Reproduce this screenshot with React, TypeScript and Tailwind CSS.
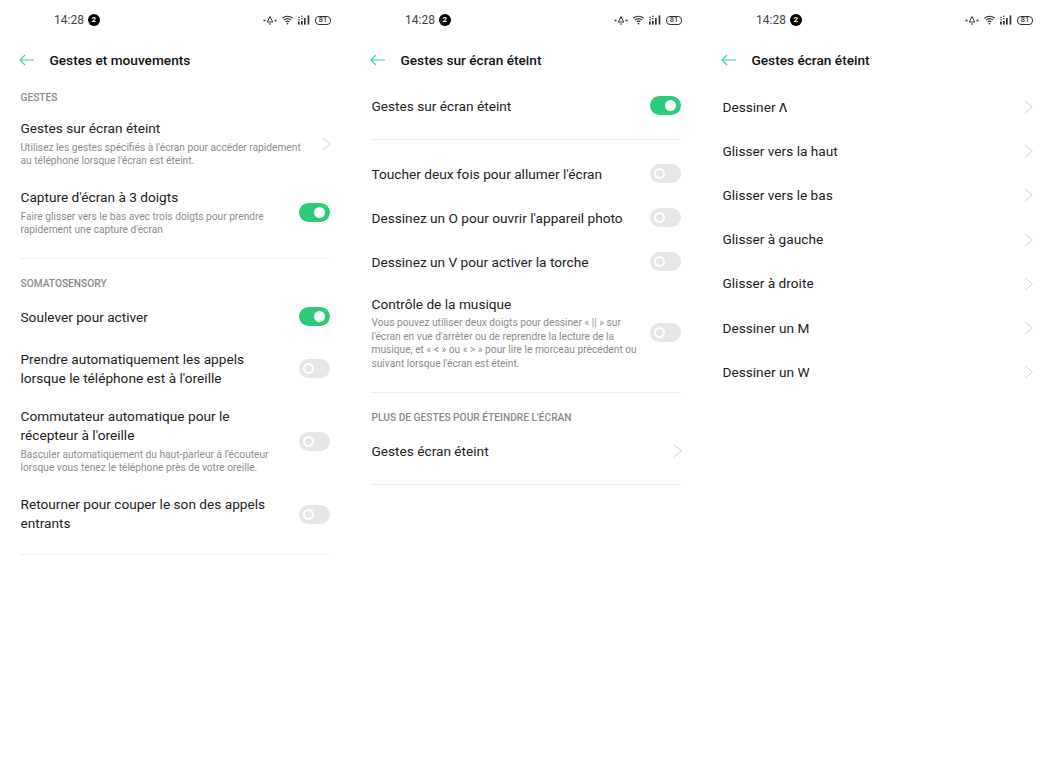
import React from "react";

function StatusBar({ wide }: { wide?: boolean }) {
  return (
    <div className={`h-10 flex items-center pl-[54px] justify-between ${wide ? "pr-[27px]" : "pr-[20px]"}`}>
      <div className="flex items-center gap-[4px]">
        <span className="text-[12px] text-[#444]">14:28</span>
        <span className="w-[12px] h-[12px] rounded-full bg-black text-white text-[8px] font-bold flex items-center justify-center leading-none">2</span>
      </div>
      <div className="flex items-center gap-[5px] text-[#333]">
        <svg width="14" height="11" viewBox="0 0 14 11" fill="none" stroke="#333" strokeWidth="1">
          <path d="M7 1.5 L9.7 7 H4.3 Z M6 9h2" />
          <path d="M.5 5.5h2M11.5 5.5h2" strokeWidth="1.4" />
        </svg>
        <svg width="11" height="10" viewBox="0 0 11 10" fill="none" stroke="#333" strokeWidth="1.2">
          <path d="M.4 3.2C3.2.6 7.8.6 10.6 3.2M2 5C4 3.4 7 3.4 9 5M3.7 6.8C4.7 6 6.3 6 7.3 6.8" />
          <circle cx="5.5" cy="8.6" r=".9" fill="#333" stroke="none" />
        </svg>
        <svg width="12" height="10" viewBox="0 0 12 10" fill="#333">
          <rect x="0" y="6.5" width="1.7" height="3.1" />
          <rect x="3" y="6" width="1.7" height="3.6" />
          <rect x="6" y="3" width="1.7" height="6.6" />
          <rect x="9.6" y="0.4" width="1.7" height="9.2" />
          <rect x="0.4" y="1.8" width="1.3" height="1.3" />
          <rect x="3.1" y="0.6" width="1.3" height="1.3" />
          <rect x="3.1" y="3" width="1.3" height="1.3" />
          <rect x="0.4" y="4" width="1.3" height="1.3" />
        </svg>
        <span className="w-[16px] h-[9px] rounded-[4px] border border-[#333] text-[7.5px] font-medium leading-none flex items-center justify-center">81</span>
      </div>
    </div>
  );
}

function Header({ title }: { title: string }) {
  return (
    <div className="h-10 flex items-center pl-[19px]">
      <svg width="16" height="12" viewBox="0 0 16 12" fill="none" stroke="#3ed08a" strokeWidth="1.1">
        <path d="M15 6H1M6 1L1 6l5 5" />
      </svg>
      <span className="ml-[14.5px] text-[13.66px] font-medium text-[#111]">{title}</span>
    </div>
  );
}

function Toggle({ on }: { on?: boolean }) {
  return on ? (
    <div className="w-[31px] h-[19px] rounded-full bg-[#2dcb7b] flex items-center justify-end pr-[5px] shrink-0">
      <div className="w-[11px] h-[11px] rounded-full bg-white" />
    </div>
  ) : (
    <div className="w-[31px] h-[19px] rounded-full bg-[#e6e6e6] flex items-center pl-[4px] shrink-0">
      <div className="w-[11px] h-[11px] rounded-full border-[2.5px] border-white" />
    </div>
  );
}

function Chevron() {
  return (
    <svg className="shrink-0 -mr-[1px]" width="9" height="14" viewBox="0 0 9 14" fill="none" stroke="#d2d2d2" strokeWidth="1">
      <path d="M1 1l7.4 6L1 13" />
    </svg>
  );
}

function Section({ children }: { children: React.ReactNode }) {
  return <div className="pl-[0.5px] pt-[2px] flex items-center text-[10.2px] font-medium text-[#8a8a8a]">{children}</div>;
}

function Row({ title, sub, right, cls, nudge }: { title: React.ReactNode; sub?: React.ReactNode; right: React.ReactNode; cls: string; nudge?: boolean }) {
  return (
    <div className={`${cls} flex items-center justify-between`}>
      <div className={`w-[282px] pl-[0.5px] ${nudge ? "pt-[2px]" : ""}`}>
        <div className="text-[13.66px] leading-[19px] text-[#222]">{title}</div>
        {sub && <div className="mt-[2.5px] text-[10.2px] leading-[13.5px] text-[#8c8c8c]">{sub}</div>}
      </div>
      {right}
    </div>
  );
}

function Divider() {
  return <div className="h-px bg-[#eeeeee]" />;
}

export default function App() {
  return (
    <div className="w-[1060px] h-[770px] bg-white flex font-['Roboto',sans-serif] overflow-hidden">
      <div className="w-[351px] shrink-0">
        <StatusBar />
        <Header title="Gestes et mouvements" />
        <div className="pl-[20px] pr-[21px]">
          <div className="h-[34px] flex items-center"><Section>GESTES</Section></div>
          <Row cls="h-[59px]" title="Gestes sur écran éteint" sub={<>Utilisez les gestes spécifiés à l'écran pour accéder rapidement<br />au téléphone lorsque l'écran est éteint.</>} right={<Chevron />} />
          <Row cls="h-[58px] mt-[10.5px]" title="Capture d'écran à 3 doigts" sub={<>Faire glisser vers le bas avec trois doigts pour prendre<br />rapidement une capture d'écran</>} right={<Toggle on />} />
          <div className="h-[16.5px]" />
          <Divider />
          <div className="h-[48px] flex items-center"><Section>SOMATOSENSORY</Section></div>
          <Row nudge cls="h-[19px]" title="Soulever pour activer" right={<Toggle on />} />
          <Row cls="h-[38px] mt-[23.5px]" title={<>Prendre automatiquement les appels<br />lorsque le téléphone est à l'oreille</>} right={<Toggle />} />
          <Row cls="h-[67px] mt-[20px]" title={<>Commutateur automatique pour le<br />récepteur à l'oreille</>} sub={<>Basculer automatiquement du haut-parleur à l'écouteur<br />lorsque vous tenez le téléphone près de votre oreille.</>} right={<Toggle />} />
          <Row cls="h-[38px] mt-[20.5px]" title={<>Retourner pour couper le son des appels<br />entrants</>} right={<Toggle />} />
          <div className="h-[21px]" />
          <Divider />
        </div>
      </div>

      <div className="w-[351px] shrink-0">
        <StatusBar />
        <Header title="Gestes sur écran éteint" />
        <div className="pl-[20px] pr-[21px]">
          <Row nudge cls="h-[19px] mt-[16px]" title="Gestes sur écran éteint" right={<Toggle on />} />
          <div className="h-[24px]" />
          <Divider />
          <Row nudge cls="h-[19px] mt-[24px]" title="Toucher deux fois pour allumer l'écran" right={<Toggle />} />
          <Row nudge cls="h-[19px] mt-[25px]" title="Dessinez un O pour ouvrir l'appareil photo" right={<Toggle />} />
          <Row nudge cls="h-[19px] mt-[25px]" title="Dessinez un V pour activer la torche" right={<Toggle />} />
          <Row cls="h-[75.5px] mt-[23.5px]" title="Contrôle de la musique" sub={<>Vous pouvez utiliser deux doigts pour dessiner « || » sur<br />l'écran en vue d'arrêter ou de reprendre la lecture de la<br />musique, et « &lt; » ou « &gt; » pour lire le morceau précédent ou<br />suivant lorsque l'écran est éteint.</>} right={<Toggle />} />
          <div className="h-[22px]" />
          <Divider />
          <div className="h-[48px] flex items-center"><Section>PLUS DE GESTES POUR ÉTEINDRE L'ÉCRAN</Section></div>
          <Row cls="h-[19px] mt-[0.5px]" title="Gestes écran éteint" right={<Chevron />} />
          <div className="h-[23.5px]" />
          <Divider />
        </div>
      </div>

      <div className="w-[358px] shrink-0">
        <StatusBar wide />
        <Header title="Gestes écran éteint" />
        <div className="pl-[20px] pr-[28px] pt-[5px]">
          {[
            <>Dessiner <span className="text-[16px] leading-[16px] font-light">ʌ</span></>,
            "Glisser vers la haut",
            "Glisser vers le bas",
            "Glisser à gauche",
            "Glisser à droite",
            "Dessiner un M",
            "Dessiner un W",
          ].map((t, i) => (
            <Row key={i} cls="h-[44.2px]" title={t} right={<Chevron />} />
          ))}
        </div>
      </div>
    </div>
  );
}
